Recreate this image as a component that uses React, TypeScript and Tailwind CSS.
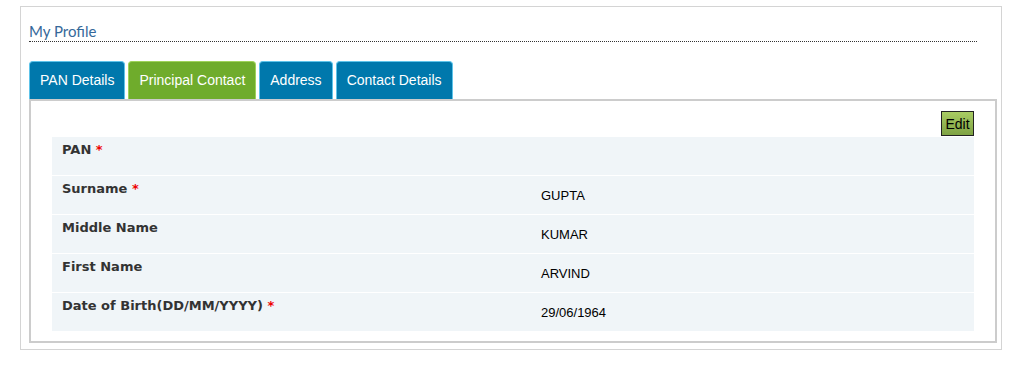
import React from 'react';

type Row = { label: string; value: string; required?: boolean };

const rows: Row[] = [
  { label: 'PAN', value: '', required: true },
  { label: 'Surname', value: 'GUPTA', required: true },
  { label: 'Middle Name', value: 'KUMAR' },
  { label: 'First Name', value: 'ARVIND' },
  { label: 'Date of Birth(DD/MM/YYYY)', value: '29/06/1964', required: true },
];

const tabs = [
  { name: 'PAN Details', active: false },
  { name: 'Principal Contact', active: true },
  { name: 'Address', active: false },
  { name: 'Contact Details', active: false },
];

export default function App() {
  return (
    <div className="w-[1029px] h-[377px] bg-white pt-[6px] pl-[20px] font-['Liberation_Sans',Arial,sans-serif]">
      <div className="w-[982px] h-[344px] border border-[#d4d4d4] pl-[8px] pr-[3px]">
        {/* Heading */}
        <div className="w-[948px] mt-[15px] h-[20px] border-b border-dotted border-[#333] text-[15px] leading-[18px] text-[#35689a] font-['Lato','Liberation_Sans',sans-serif]">
          My Profile
        </div>

        {/* Tabs */}
        <div className="flex gap-[3px] mt-[19px] h-[38px] items-end">
          {tabs.map((t) => (
            <div
              key={t.name}
              className={
                t.active
                  ? 'h-[38px] px-[10px] flex items-center rounded-t-[4px] border border-b-0 border-[#9fd35a] bg-[#6fac2c] text-white text-[14px]'
                  : 'h-[38px] px-[10px] flex items-center rounded-t-[4px] border border-b-0 border-[#5ec4ea] bg-[#0078ac] text-white text-[14px]'
              }
            >
              {t.name}
            </div>
          ))}
        </div>

        {/* Panel */}
        <div className="w-[968px] h-[244px] border-2 border-[#cccccc] pt-[10px] pl-[21px]">
          <div className="w-[922px] flex justify-end">
            <button className="w-[33px] h-[25px] border border-[#222] bg-gradient-to-b from-[#a9cc63] to-[#7ea244] text-[14px] text-black leading-none">
              Edit
            </button>
          </div>
          <div className="w-[922px] mt-[1px] flex flex-col gap-[1px]">
            {rows.map((r) => (
              <div key={r.label} className="h-[38px] bg-[#f0f5f8] flex">
                <div className="w-[479px] pl-[10px] pt-[3px] text-[13px] font-bold text-[#333] font-['DejaVu_Sans',Verdana,sans-serif]">
                  {r.label}
                  {r.required && <span className="text-[#e00]"> *</span>}
                </div>
                <div className="pl-[10px] flex items-center pt-[1px] text-[13px] text-black">
                  {r.value}
                </div>
              </div>
            ))}
          </div>
        </div>
      </div>
    </div>
  );
}
